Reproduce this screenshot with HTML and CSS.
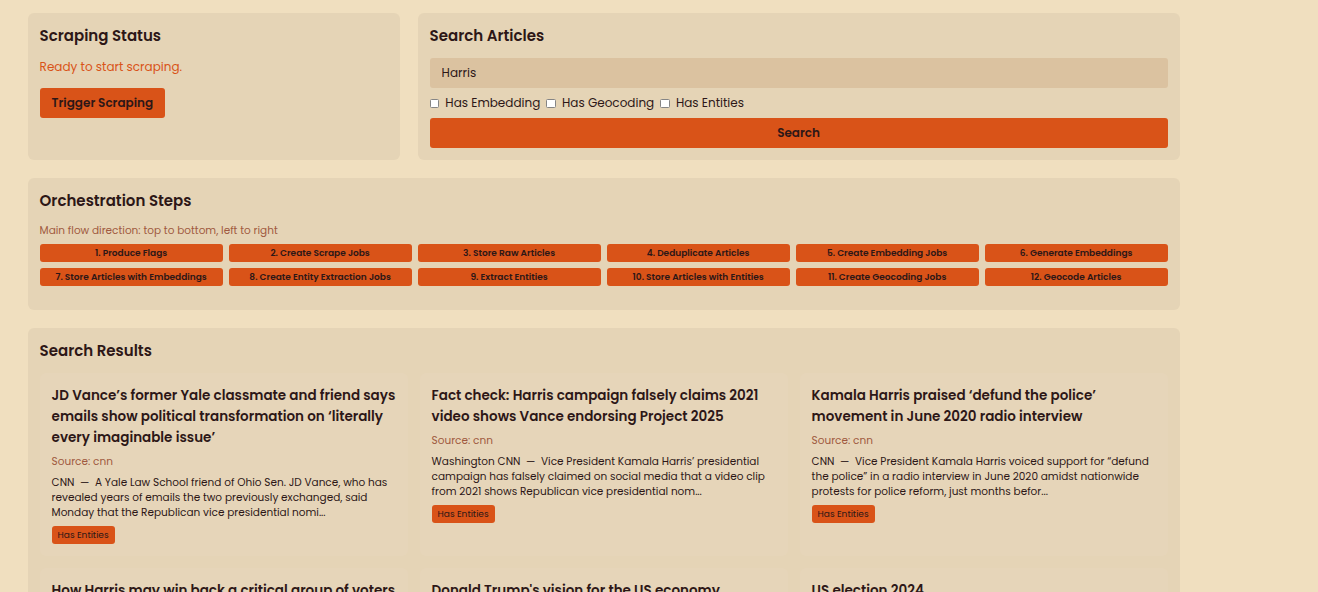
FILE: index.html
```
<!DOCTYPE html>
<html lang="en">
<head>
<meta charset="utf-8">
<title>News Dashboard</title>
<link rel="stylesheet" href="styles.css">
</head>
<body>
<main class="dashboard">
  <section class="panel">
    <h2>Scraping Status</h2>
    <p class="status">Ready to start scraping.</p>
    <button class="button" type="button">Trigger Scraping</button>
  </section>

  <section class="panel panel-search">
    <h2>Search Articles</h2>
    <form class="search-form">
      <input class="search-input" type="text" value="Harris">
      <div class="filters">
        <label class="filter"><input type="checkbox">Has Embedding</label>
        <label class="filter"><input type="checkbox">Has Geocoding</label>
        <label class="filter"><input type="checkbox">Has Entities</label>
      </div>
      <button class="button" type="button">Search</button>
    </form>
  </section>

  <section class="panel panel-wide">
    <h2>Orchestration Steps</h2>
    <p class="hint">Main flow direction: top to bottom, left to right</p>
    <div class="steps">
      <button class="step" type="button">1. Produce Flags</button>
      <button class="step" type="button">2. Create Scrape Jobs</button>
      <button class="step" type="button">3. Store Raw Articles</button>
      <button class="step" type="button">4. Deduplicate Articles</button>
      <button class="step" type="button">5. Create Embedding Jobs</button>
      <button class="step" type="button">6. Generate Embeddings</button>
      <button class="step" type="button">7. Store Articles with Embeddings</button>
      <button class="step" type="button">8. Create Entity Extraction Jobs</button>
      <button class="step" type="button">9. Extract Entities</button>
      <button class="step" type="button">10. Store Articles with Entities</button>
      <button class="step" type="button">11. Create Geocoding Jobs</button>
      <button class="step" type="button">12. Geocode Articles</button>
    </div>
  </section>

  <section class="panel panel-wide">
    <h2>Search Results</h2>
    <div class="results">
      <article class="card">
        <h3>JD Vance’s former Yale classmate and friend says emails show political transformation on ‘literally every imaginable issue’</h3>
        <p class="source">Source: cnn</p>
        <p class="excerpt">CNN &nbsp;— &nbsp;A Yale Law School friend of Ohio Sen. JD Vance, who has revealed years of emails the two previously exchanged, said Monday that the Republican vice presidential nomi...</p>
        <span class="tag">Has Entities</span>
      </article>
      <article class="card">
        <h3>Fact check: Harris campaign falsely claims 2021 video shows Vance endorsing Project 2025</h3>
        <p class="source">Source: cnn</p>
        <p class="excerpt">Washington CNN &nbsp;— &nbsp;Vice President Kamala Harris’ presidential campaign has falsely claimed on social media that a video clip from 2021 shows Republican vice presidential nom...</p>
        <span class="tag">Has Entities</span>
      </article>
      <article class="card">
        <h3>Kamala Harris praised ‘defund the police’ movement in June 2020 radio interview</h3>
        <p class="source">Source: cnn</p>
        <p class="excerpt">CNN &nbsp;— &nbsp;Vice President Kamala Harris voiced support for “defund the police” in a radio interview in June 2020 amidst nationwide protests for police reform, just months befor...</p>
        <span class="tag">Has Entities</span>
      </article>
      <article class="card">
        <h3>How Harris may win back a critical group of voters</h3>
      </article>
      <article class="card">
        <h3>Donald Trump's vision for the US economy</h3>
      </article>
      <article class="card">
        <h3>US election 2024</h3>
      </article>
    </div>
  </section>
</main>
</body>
</html>
```
FILE: styles.css
```
* {
  box-sizing: border-box;
}

body {
  margin: 0;
  height: 592px;
  overflow: hidden;
  background: #f0dfbf;
  color: #2d1717;
  font: 12px/18px Poppins, Inter, sans-serif;
}

h2,
h3,
p {
  margin: 0;
}

.dashboard {
  display: grid;
  grid-template-columns: repeat(3, 372px);
  gap: 18px;
  padding: 13px 0 0 27.6px;
}

.panel {
  padding: 12px;
  border-radius: 6px;
  background: #e5d4b6;
}

.panel-search {
  grid-column: span 2;
}

.panel-wide {
  grid-column: span 3;
}

.panel h2 {
  margin-bottom: 10.5px;
  font-size: 15px;
  font-weight: 600;
  line-height: 22.5px;
}

.status {
  margin-bottom: 12px;
  color: #d95318;
}

.button,
.step {
  border: 0;
  border-radius: 3px;
  background: #d95318;
  color: #2d1717;
  font-family: inherit;
  font-weight: 600;
}

.button {
  height: 30px;
  padding: 0 12px;
  font-size: 12px;
  line-height: 18px;
}

.search-form {
  display: flex;
  flex-direction: column;
  gap: 6px;
}

.search-input {
  height: 30px;
  padding: 6px 12px;
  border: 0;
  border-radius: 3px;
  background: #dbc2a0;
  color: inherit;
  font: inherit;
}

.filters {
  display: flex;
  gap: 6px;
}

.filter {
  display: flex;
  align-items: center;
  gap: 6px;
}

.filter input {
  appearance: none;
  width: 9.5px;
  height: 9px;
  margin: 0 0.25px 0 0;
  border: 1px solid #858585;
  border-radius: 1.5px;
  background: #fff;
}

.hint,
.source {
  color: #a05a40;
  font-size: 10.5px;
  line-height: 15px;
}

.hint {
  margin-bottom: 6px;
}

.steps {
  display: grid;
  grid-template-columns: repeat(6, 1fr);
  gap: 6px;
  margin-bottom: 12px;
}

.step {
  height: 18px;
  padding: 0;
  font-size: 9px;
  line-height: 12px;
}

.results {
  display: grid;
  grid-template-columns: repeat(3, minmax(0, 1fr));
  gap: 12px;
}

.card {
  padding: 12px;
  border-radius: 6px;
  background: #e6d5b9;
}

.card h3 {
  margin-bottom: 6px;
  font-size: 13.5px;
  font-weight: 600;
  line-height: 21px;
}

.source {
  margin-bottom: 6px;
}

.excerpt {
  margin-bottom: 6px;
  font-size: 10.5px;
  line-height: 15px;
}

.tag {
  display: block;
  width: fit-content;
  padding: 3px 6px;
  border-radius: 3px;
  background: #d95318;
  font-size: 9px;
  line-height: 12px;
}
```
